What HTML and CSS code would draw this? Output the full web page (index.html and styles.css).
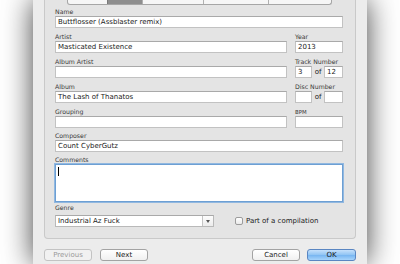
FILE: index.html
```html
<!DOCTYPE html>
<html lang="en">
<head>
	<meta charset="UTF-8">
	<title>Info</title>
	<link rel="stylesheet" href="styles.css">
</head>
<body>
	<div class="window">
		<div class="panel">
			<div class="tabs">
				<span class="seg s1"></span>
				<span class="seg s2 on"></span>
				<span class="seg s3"></span>
				<span class="seg s4"></span>
				<span class="seg s5"></span>
			</div>
			<div class="form">
				<div class="fld wide">
					<label>Name</label>
					<div class="box">Buttflosser (Assblaster remix)</div>
				</div>
				<div class="fld">
					<label>Artist</label>
					<div class="box">Masticated Existence</div>
				</div>
				<div class="fld">
					<label>Year</label>
					<div class="box">2013</div>
				</div>
				<div class="fld">
					<label>Album Artist</label>
					<div class="box"></div>
				</div>
				<div class="fld">
					<label>Track Number</label>
					<div class="pair">
						<div class="box small">3</div>
						<span class="of">of</span>
						<div class="box small2">12</div>
					</div>
				</div>
				<div class="fld">
					<label>Album</label>
					<div class="box">The Lash of Thanatos</div>
				</div>
				<div class="fld">
					<label>Disc Number</label>
					<div class="pair">
						<div class="box small"></div>
						<span class="of">of</span>
						<div class="box small2"></div>
					</div>
				</div>
				<div class="fld">
					<label>Grouping</label>
					<div class="box"></div>
				</div>
				<div class="fld">
					<label class="tiny">BPM</label>
					<div class="box"></div>
				</div>
				<div class="fld wide composer">
					<label>Composer</label>
					<div class="box">Count CyberGutz</div>
				</div>
				<div class="fld wide comments">
					<label>Comments</label>
					<div class="box area"><span class="caret"></span></div>
				</div>
			</div>
			<div class="genre">
				<label>Genre</label>
				<div class="genrerow">
					<div class="combo">
						<span class="combotext">Industrial Az Fuck</span>
						<span class="arrow"></span>
					</div>
					<span class="check"></span>
					<span class="checklabel">Part of a compilation</span>
				</div>
			</div>
		</div>
		<div class="actions">
			<div class="group">
				<div class="btn off">Previous</div>
				<div class="btn">Next</div>
			</div>
			<div class="group right">
				<div class="btn">Cancel</div>
				<div class="btn ok">OK</div>
			</div>
		</div>
	</div>
</body>
</html>
```

FILE: styles.css
```css
*{
	margin:0;
	padding:0;
	box-sizing:border-box;
}
body{
	background:#fff;
	width:400px;
	height:264px;
	overflow:hidden;
	font-family:"DejaVu Sans", "Liberation Sans", sans-serif;
	color:#1a1a1a;
}
.window{
	margin-left:33px;
	width:334px;
	height:264px;
	background:#ececec;
	padding:0 11px;
	box-shadow:0 0 28px rgba(0,0,0,0.75);
}
.panel{
	height:239px;
	background:#e4e4e4;
	border:1px solid #c9c9c9;
	border-top:none;
	border-radius:0 0 4px 4px;
	padding:0 12px 0 10px;
}
/* segmented tab control, only its bottom edge shows */
.tabs{
	display:flex;
	width:265px;
	height:5px;
	margin-left:12px;
	border:1px solid #a6a6a6;
	border-top:none;
	border-radius:0 0 3px 3px;
	overflow:hidden;
	background:#f6f6f6;
}
.seg{
	height:100%;
	border-left:1px solid #b0b0b0;
}
.seg:first-child{
	border-left:none;
}
.s1{width:39px;}
.s2{width:36px;}
.s3{width:61px;}
.s4{width:65px;}
.s5{width:64px;}
.seg.on{
	background:#8e8e8e;
	border-left-color:#7a7a7a;
}
.form{
	display:grid;
	grid-template-columns:232px 48px;
	column-gap:8px;
	row-gap:5px;
	margin-top:3px;
}
.fld{
	display:flex;
	flex-direction:column;
}
.wide{
	grid-column:1 / 3;
}
.composer,
.comments{
	margin-top:-1px;
}
label{
	display:block;
	height:8px;
	line-height:8px;
	font-size:6.2px;
	color:#383838;
}
label.tiny{
	font-size:5.4px;
}
.box{
	height:12px;
	background:#fff;
	border:1px solid #c2c2c2;
	border-top-color:#a9a9a9;
	font-size:7px;
	line-height:10px;
	padding-left:2px;
	white-space:nowrap;
	overflow:hidden;
}
.pair{
	display:flex;
	align-items:center;
}
.small{
	width:17px;
}
.small2{
	width:19px;
}
.of{
	width:12px;
	text-align:center;
	font-size:7px;
	color:#222;
}
.area{
	height:38px;
	border:1px solid #6d9fd3;
	box-shadow:0 0 0 1px rgba(110,165,222,0.7);
	padding:2px 0 0 2px;
}
.caret{
	display:block;
	width:1px;
	height:9px;
	background:#000;
}
.genre label{
	margin-top:2px;
}
.genrerow{
	display:flex;
	align-items:center;
	margin-top:3px;
}
.combo{
	display:flex;
	width:159px;
	height:12px;
	background:#fff;
	border:1px solid #b9b9b9;
	border-top-color:#a9a9a9;
	font-size:7px;
	line-height:10px;
}
.combotext{
	flex:1;
	padding-left:2px;
}
.arrow{
	width:11px;
	border-left:1px solid #c4c4c4;
	background:linear-gradient(#fdfdfd,#ececec);
	position:relative;
}
.arrow::after{
	content:"";
	position:absolute;
	left:3px;
	top:4px;
	border-left:2px solid transparent;
	border-right:2px solid transparent;
	border-top:3px solid #555;
}
.check{
	width:8px;
	height:8px;
	margin-left:21px;
	border:1px solid #9c9c9c;
	border-radius:2px;
	background:linear-gradient(#fff,#e9e9e9);
}
.checklabel{
	margin-left:3px;
	font-size:7px;
	color:#222;
}
.actions{
	display:flex;
	justify-content:space-between;
	margin-top:10px;
}
.group{
	display:flex;
	gap:8px;
}
.group.right{
	gap:7px;
}
.btn{
	width:48px;
	height:12px;
	border:1px solid #a3a3a3;
	border-radius:3px;
	background:linear-gradient(#ffffff,#f0f0f0);
	font-size:7px;
	line-height:10px;
	text-align:center;
	color:#1a1a1a;
}
.btn.off{
	color:#9a9a9a;
	border-color:#c3c3c3;
	background:#f1f1f1;
}
.btn.ok{
	width:49px;
	border-color:#5a86c2;
	background:linear-gradient(#c5e0fb,#8fc4f4 50%,#76b5f1 51%,#a7d4fb);
}
```
